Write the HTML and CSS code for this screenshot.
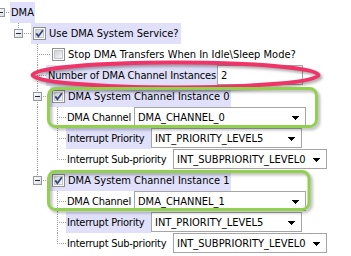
FILE: index.html
```html
<!DOCTYPE html>
<html lang="en">
<head>
  <meta charset="UTF-8">
  <title>DMA configuration tree</title>
  <link rel="stylesheet" href="styles.css">
</head>
<body>
<svg class="defs" width="0" height="0">
  <defs>
    <linearGradient id="cbFill" x1="0" y1="0" x2="1" y2="1">
      <stop offset="0" stop-color="#cdd0d6"/>
      <stop offset="1" stop-color="#f7f7f7"/>
    </linearGradient>
    <linearGradient id="expFill" x1="0" y1="0" x2="1" y2="1">
      <stop offset="0" stop-color="#ffffff"/>
      <stop offset="1" stop-color="#dcdcdc"/>
    </linearGradient>
    <symbol id="cb-off" viewBox="0 0 13 13">
      <rect x="0.5" y="0.5" width="12" height="12" fill="#fdfdfd" stroke="#8e8f8f"/>
      <rect x="2.5" y="2.5" width="8" height="8" fill="url(#cbFill)" stroke="#c3c6cb"/>
    </symbol>
    <symbol id="cb-on" viewBox="0 0 13 13">
      <rect x="0.5" y="0.5" width="12" height="12" fill="#fdfdfd" stroke="#8e8f8f"/>
      <rect x="2.5" y="2.5" width="8" height="8" fill="url(#cbFill)" stroke="#c3c6cb"/>
      <path d="M3.3 6.4 L5.4 9.2 L9.9 3.2" fill="none" stroke="#34467a" stroke-width="1.8"/>
    </symbol>
    <symbol id="exp" viewBox="0 0 9 9">
      <rect x="0.5" y="0.5" width="8" height="8" fill="url(#expFill)" stroke="#919aa4"/>
      <path d="M2 4.5 H7" stroke="#1e2a44" stroke-width="1"/>
    </symbol>
    <symbol id="arrow" viewBox="0 0 7 4">
      <path d="M0 0h7v1h-1v1h-1v1h-1v1h-1v-1h-1v-1h-1v-1h-1z" fill="#000"/>
    </symbol>
  </defs>
</svg>

<div class="page">
  <div class="tree">
    <div class="row">
      <span class="ind dash w10"><svg class="exp"><use href="#exp"/></svg></span>
      <span class="label hl root">DMA</span>
    </div>

    <div class="row">
      <span class="ind w18"></span>
      <span class="ind elbow w13"><svg class="exp"><use href="#exp"/></svg></span>
      <span class="label hl"><svg class="cb"><use href="#cb-on"/></svg>Use DMA System Service?</span>
    </div>

    <div class="row">
      <span class="ind w37"></span>
      <span class="ind tee w13"></span>
      <span class="label"><svg class="cb"><use href="#cb-off"/></svg>Stop DMA Transfers When In Idle\Sleep Mode?</span>
    </div>

    <div class="row">
      <span class="ind w37"></span>
      <span class="ind tee w9"></span>
      <span class="label hl field">Number of DMA Channel Instances</span>
      <span class="box num">2</span>
    </div>

    <!-- instance 0 -->
    <div class="row">
      <span class="ind w37"></span>
      <span class="ind tee w13"><svg class="exp"><use href="#exp"/></svg></span>
      <span class="label hl"><svg class="cb"><use href="#cb-on"/></svg>DMA System Channel Instance 0</span>
    </div>
    <div class="row">
      <span class="ind w37"></span>
      <span class="ind pipe w20"></span>
      <span class="ind tee w9"></span>
      <span class="label sub k-chan">DMA Channel</span>
      <span class="box combo c-chan">DMA_CHANNEL_0<svg class="arrow"><use href="#arrow"/></svg></span>
    </div>
    <div class="row">
      <span class="ind w37"></span>
      <span class="ind pipe w20"></span>
      <span class="ind tee w9"></span>
      <span class="label hl sub k-prio">Interrupt Priority</span>
      <span class="box combo c-prio">INT_PRIORITY_LEVEL5<svg class="arrow"><use href="#arrow"/></svg></span>
    </div>
    <div class="row">
      <span class="ind w37"></span>
      <span class="ind pipe w20"></span>
      <span class="ind elbow w9"></span>
      <span class="label sub k-subp">Interrupt Sub-priority</span>
      <span class="box combo c-subp">INT_SUBPRIORITY_LEVEL0<svg class="arrow"><use href="#arrow"/></svg></span>
    </div>

    <!-- instance 1 -->
    <div class="row">
      <span class="ind w37"></span>
      <span class="ind elbow w13"><svg class="exp"><use href="#exp"/></svg></span>
      <span class="label hl"><svg class="cb"><use href="#cb-on"/></svg>DMA System Channel Instance 1</span>
    </div>
    <div class="row">
      <span class="ind w57"></span>
      <span class="ind tee w9"></span>
      <span class="label sub k-chan">DMA Channel</span>
      <span class="box combo c-chan">DMA_CHANNEL_1<svg class="arrow"><use href="#arrow"/></svg></span>
    </div>
    <div class="row">
      <span class="ind w57"></span>
      <span class="ind tee w9"></span>
      <span class="label hl sub k-prio">Interrupt Priority</span>
      <span class="box combo c-prio">INT_PRIORITY_LEVEL5<svg class="arrow"><use href="#arrow"/></svg></span>
    </div>
    <div class="row">
      <span class="ind w57"></span>
      <span class="ind elbow w9"></span>
      <span class="label sub k-subp">Interrupt Sub-priority</span>
      <span class="box combo c-subp">INT_SUBPRIORITY_LEVEL0<svg class="arrow"><use href="#arrow"/></svg></span>
    </div>
  </div>

  <!-- annotation shapes drawn over the screenshot -->
  <svg class="marks" width="351" height="256" viewBox="0 0 351 256">
    <ellipse class="ring" cx="175.5" cy="75" rx="143" ry="12.5"/>
    <rect class="frame" x="48.5" y="88.5" width="268" height="38" rx="7"/>
    <rect class="frame" x="48.5" y="171.5" width="260.5" height="38" rx="7"/>
  </svg>
</div>
</body>
</html>
```

FILE: styles.css
```css
body {
  margin: 0;
  background: #fff;
  color: #000;
  font-family: "DejaVu Sans Condensed", "DejaVu Sans", sans-serif;
  font-stretch: condensed;
  font-size: 11px;
}

.defs {
  position: absolute;
  width: 0;
  height: 0;
}

.page {
  position: relative;
  width: 351px;
  height: 256px;
  overflow: hidden;
}

.tree {
  padding-top: 2px;
}

.row {
  display: flex;
  align-items: center;
  height: 21px;
}

/* tree guide cells, dotted lines drawn as backgrounds */
.ind {
  flex: none;
  align-self: stretch;
  display: flex;
  align-items: center;
}
.w9 { width: 9px; }
.w10 { width: 10px; }
.w13 { width: 13px; }
.w18 { width: 18px; }
.w20 { width: 20px; }
.w37 { width: 37px; }
.w57 { width: 57px; }

.pipe {
  background: repeating-linear-gradient(to bottom, #a0a0a0 0 1px, transparent 1px 2px) 0 0 / 1px 100% no-repeat;
}
.tee {
  background:
    repeating-linear-gradient(to bottom, #a0a0a0 0 1px, transparent 1px 2px) 0 0 / 1px 100% no-repeat,
    repeating-linear-gradient(to right, #a0a0a0 0 1px, transparent 1px 2px) 0 10px / 100% 1px no-repeat;
}
.elbow {
  background:
    repeating-linear-gradient(to bottom, #a0a0a0 0 1px, transparent 1px 2px) 0 0 / 1px 11px no-repeat,
    repeating-linear-gradient(to right, #a0a0a0 0 1px, transparent 1px 2px) 0 10px / 100% 1px no-repeat;
}
.dash {
  background: repeating-linear-gradient(to right, #a0a0a0 0 1px, transparent 1px 2px) 0 10px / 100% 1px no-repeat;
}

.exp {
  width: 9px;
  height: 9px;
  margin-left: -4px;
  flex: none;
}

.label {
  display: flex;
  align-items: center;
  align-self: stretch;
  padding: 0 2px;
  white-space: nowrap;
}
.label.root {
  padding: 0 1px;
}
.label.field {
  box-sizing: border-box;
  width: 171px;
  padding: 0 0 0 2px;
  letter-spacing: -0.15px;
}
.label.sub {
  box-sizing: border-box;
  flex: none;
  padding: 0 0 0 1px;
  letter-spacing: -0.25px;
}
.k-chan { width: 68px; }
.k-prio { width: 85px; }
.k-subp { width: 107px; }

.hl {
  background: #e0e0fb;
}

.cb {
  width: 13px;
  height: 13px;
  margin-right: 3px;
  flex: none;
}

.box {
  box-sizing: border-box;
  height: 20px;
  align-self: flex-start;
  display: flex;
  align-items: center;
  padding-left: 3px;
  border: 1px solid #a5a5a5;
  background: #fff;
  white-space: nowrap;
}
.num { width: 86px; }
.combo { justify-content: space-between; }
.c-chan { width: 172px; }
.c-prio { width: 151px; }
.c-subp { width: 154px; }

.arrow {
  width: 7px;
  height: 4px;
  margin-right: 6px;
  margin-top: 2px;
  flex: none;
}

.marks {
  position: absolute;
  left: 0;
  top: 0;
  pointer-events: none;
}
.ring {
  fill: none;
  stroke: #ee3468;
  stroke-width: 4;
  filter: drop-shadow(2px 2px 1.5px rgba(0, 0, 0, 0.35));
}
.frame {
  fill: none;
  stroke: #92d050;
  stroke-width: 3;
  filter: drop-shadow(2px 2px 1.5px rgba(0, 0, 0, 0.3));
}
```
